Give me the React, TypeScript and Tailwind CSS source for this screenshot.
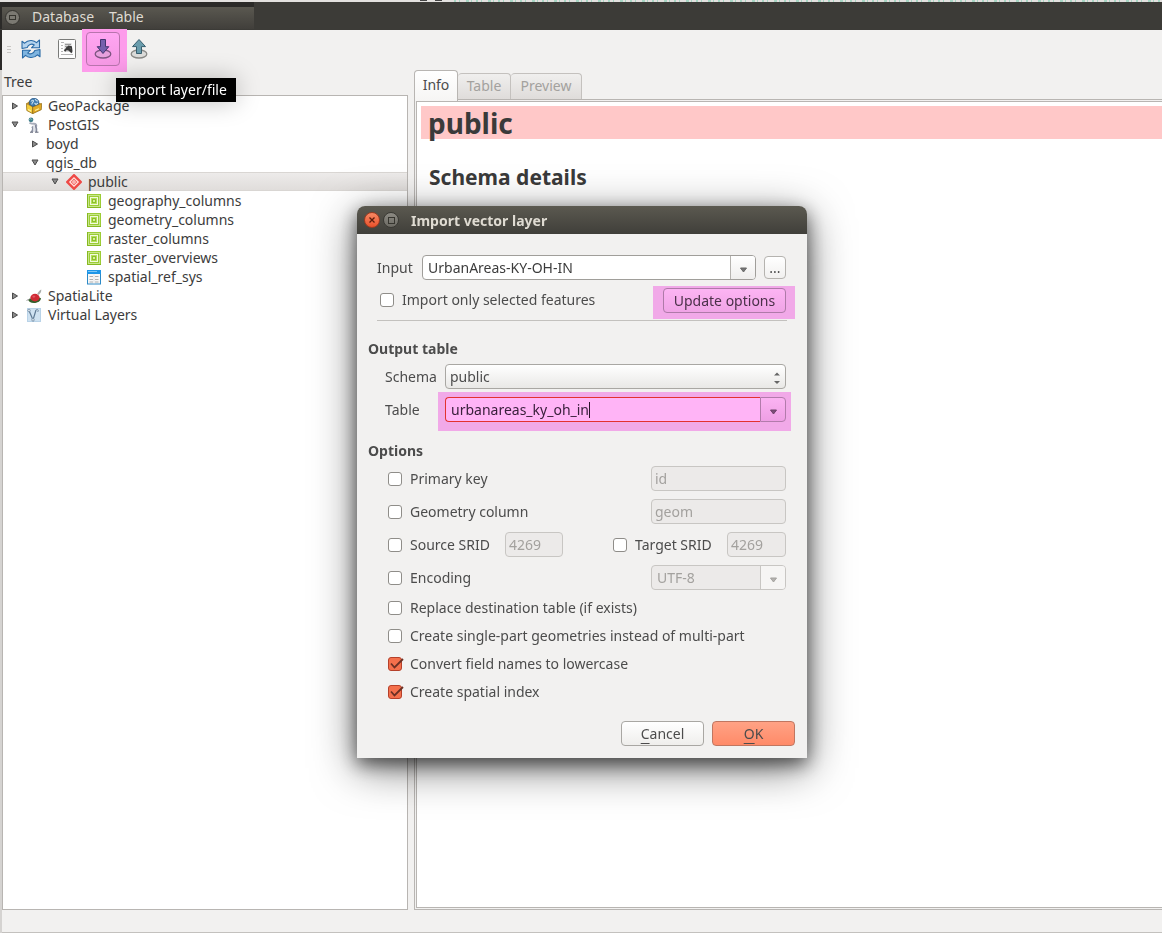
import React, { useState } from "react";

/* ---------- small drawings ---------- */

const Svg = ({ size = 16, children, className = "" }: { size?: number; children: React.ReactNode; className?: string }) => (
  <svg width={size} height={size} viewBox="0 0 16 16" aria-hidden="true" className={`shrink-0 ${className}`}>
    {children}
  </svg>
);

const RefreshIcon = () => (
  <svg width="22" height="22" viewBox="0 0 22 22" aria-hidden="true" strokeLinejoin="round">
    <path d="M2 10.500V3.200l2.600 2C6.500 3.200 9 2.300 11.500 2.500c2.200.2 3.800 1 5 2.200L19.500 2v7.800h-8l2.800-2.900C11.500 5.200 8.300 6.500 7.200 9.500z" fill="#b4d3ee" stroke="#2a6aa6" strokeWidth="1.100" />
    <path d="M20 11.500v7.300l-2.600-2c-1.900 2-4.400 2.900-6.900 2.700-2.200-.2-3.800-1-5-2.200L2.500 20v-7.800h8l-2.800 2.900c2.800 1.700 6 .4 7.100-2.600z" fill="#7fb5e0" stroke="#2a6aa6" strokeWidth="1.100" />
  </svg>
);

const SqlIcon = () => (
  <svg width="20" height="22" viewBox="0 0 20 22" aria-hidden="true">
    <rect x="1.500" y="1.500" width="17" height="19" rx="1" fill="#fdfdfd" stroke="#7a7b79" />
    <path d="M4 4.500h3M4 7.500h2M4 10.500h2M4 13.500h2M4 16.500h12" stroke="#b5b5b5" />
    <path d="M7.500 5h7v9h-7z" fill="#d9d9d9" />
    <path d="M8 6.500h6M8 8.500h3" stroke="#9a9a9a" />
    <path d="M7.500 13l3-3 4.500 4.500M11 8.500l3 .5.500 4" stroke="#3b3b3b" strokeWidth="2" fill="none" />
    <circle cx="11" cy="10.500" r="2" fill="#3b3b3b" />
  </svg>
);

const ImportIcon = () => (
  <svg width="20" height="22" viewBox="0 0 20 22" aria-hidden="true">
    <ellipse cx="10" cy="16" rx="7.800" ry="4" fill="#e7a0dd" stroke="#7d5481" strokeWidth="1.300" />
    <path d="M7.500 1.500h5v7.200h3.300L10 15.500 4.200 8.700h3.300z" fill="#7460ac" stroke="#43356f" strokeLinejoin="round" />
  </svg>
);

const ExportIcon = () => (
  <svg width="20" height="22" viewBox="0 0 20 22" aria-hidden="true">
    <ellipse cx="10" cy="16" rx="7.800" ry="4" fill="#dcdcda" stroke="#898986" strokeWidth="1.300" />
    <path d="M7.500 15.500h5V8.600h4L10 1.500 3.500 8.600h4z" fill="#6a9dad" stroke="#385f6f" strokeLinejoin="round" />
  </svg>
);

const GeoPackageIcon = () => (
  <Svg>
    <path d="M.3 5.500l6.400 3.300v6.900L.8 12.500z" fill="#f6cf3c" stroke="#8a6410" strokeWidth=".7" />
    <path d="M15.700 5.500l-9 3.300v6.900l8.600-4z" fill="#e3ab26" stroke="#8a6410" strokeWidth=".7" />
    <path d="M.3 5.500l3-2.300 12.400 2.300-9 3.300z" fill="#b98a2a" />
    <path d="M3.500 6.500C2.500 2.500 5 .3 8 .3s5.500 2.200 4.800 5.700L6.700 8.500z" fill="#3f7bb0" stroke="#1c4a78" strokeWidth=".6" />
    <path d="M5 3.500c1-1.500 2.500-1.500 2.500-.5S5.500 4.500 6 6.500M9 1.200l1.500 1.600 1.500.200M8.500 5l1.500 1.500 2-1.500" stroke="#c9dfee" fill="none" strokeWidth="1.100" />
    <path d="M2 11.500l3 1.600M9 12.500l4-1.800" stroke="#fff0a0" strokeWidth="1.200" />
  </Svg>
);

const PostgisIcon = () => (
  <Svg>
    <circle cx="5" cy="2.800" r="2.400" fill="#3f7f8c" />
    <path d="M3.300 2.500c1-1.200 1.800-.8 2.600.2" stroke="#9fd0c5" fill="none" />
    <path d="M3.500 5.800c1.500.7 2.500 1 4.500 1s2.500 1 2.200 2.700" fill="none" stroke="#a9adba" strokeWidth="2" />
    <path d="M9.500 8c.8 2.500 1.200 5 .8 7M6 9.500c1.500 1.500 1 3.500-.5 5.500" fill="none" stroke="#858b9d" strokeWidth="1.800" />
    <path d="M7.500 8.500c.5 2 .5 4 .3 6.500" stroke="#d5d8e0" strokeWidth="1.800" fill="none" />
    <path d="M4 15.200h3M9 15.200h3.500" stroke="#5d6375" />
  </Svg>
);

const SchemaIcon = () => (
  <Svg>
    <path d="M8 1L15 8 8 15 1 8z" fill="#f2534f" stroke="#ee4a47" strokeWidth="2" strokeLinejoin="round" />
    <path d="M8 3.800L12.200 8 8 12.200 3.800 8z" fill="none" stroke="#ffe3e0" strokeWidth="1.200" />
    <circle cx="8" cy="8" r="1.700" fill="#fff0ee" />
    <circle cx="8" cy="8" r=".7" fill="#ee4c49" />
  </Svg>
);

const PolygonLayerIcon = () => (
  <Svg>
    <rect x="1" y="1" width="14" height="14" fill="#9ccc35" />
    <rect x="2.500" y="2.500" width="11" height="11" fill="none" stroke="#c7e68c" />
    <rect x="4.500" y="4.500" width="7" height="7" fill="#b4df5b" stroke="#f2fadf" />
    <rect x="6.500" y="6.500" width="3" height="3" fill="#d6f29a" stroke="#8dbf2a" />
    <path d="M1.500 1v13.500H15" fill="none" stroke="#86b820" />
  </Svg>
);

const TableLayerIcon = () => (
  <Svg>
    <rect x="1.500" y="1.500" width="13" height="13.500" fill="#f7f7f7" stroke="#2c8ac7" />
    <rect x="1" y="1" width="14" height="4" fill="#1e96e8" />
    <rect x="2" y="2" width="9" height="1" fill="#7cc6f5" />
    <path d="M3.500 7.500h3.500M9 7.500h3.500M3.500 10.500h3.500M9 10.500h3.500M3.500 13h3.500M9 13h3.500" stroke="#b0b0b0" />
    <path d="M8 5.500v9" stroke="#d5d5d5" strokeDasharray="1 1" />
  </Svg>
);

const SpatiaLiteIcon = () => (
  <Svg>
    <path d="M2 11.500c2-2 12-3 13-1-.5 3-4 4.500-7 4.500-3.500 0-5.500-1.800-6-3.500z" fill="#35602b" />
    <ellipse cx="9" cy="9.600" rx="4.600" ry="3.800" fill="#cf2a34" />
    <ellipse cx="7.800" cy="8.600" rx="1.500" ry="1.100" fill="#de5660" />
    <path d="M15.300 1.500c.2 2.200-.8 4.200-2.800 5.400L11.300 5.800c1-2 2.200-3.500 4-4.300z" fill="#a9aca9" />
    <path d="M.5 12.500l3-1.500" stroke="#9b9b9b" />
  </Svg>
);

const VirtualLayerIcon = () => (
  <Svg>
    <rect x="1" y="1" width="14" height="14" fill="#b9d3e8" />
    <rect x="2" y="2" width="12" height="12" fill="#cfe2f1" />
    <path d="M3 3.500l4 9.500 3-10" fill="none" stroke="#5f7a94" strokeWidth="1.200" />
    <circle cx="3" cy="3.500" r="1.300" fill="#dfe9f2" stroke="#6f879e" strokeWidth=".7" />
    <circle cx="7" cy="12.800" r="1.300" fill="#dfe9f2" stroke="#6f879e" strokeWidth=".7" />
    <path d="M10 3c2-1.500 3 .5 1.500 2" fill="none" stroke="#6f879e" />
  </Svg>
);

const Arrow = ({ open }: { open: boolean }) => (
  <svg width="10" height="10" viewBox="0 0 10 10" aria-hidden="true" className="shrink-0">
    {open ? (
      <path d="M2 2h6L5 7z" fill="#8a8a8a" stroke="#4c4c4c" strokeLinejoin="round" />
    ) : (
      <path d="M2.500 2v6L7.500 5z" fill="#8a8a8a" stroke="#4c4c4c" strokeLinejoin="round" />
    )}
  </svg>
);

const DownGlyph = ({ className }: { className: string }) => (
  <svg width="9" height="6" viewBox="0 0 9 6" aria-hidden="true" className={className}>
    <path d="M1.500 1h6L4.500 5z" />
  </svg>
);

/* ---------- tree ---------- */

type Row = {
  label: string;
  level: "root" | "conn" | "schema" | "leaf";
  open?: boolean;
  icon?: React.ReactNode;
  selected?: boolean;
};

const rows: Row[] = [
  { label: "GeoPackage", level: "root", open: false, icon: <GeoPackageIcon /> },
  { label: "PostGIS", level: "root", open: true, icon: <PostgisIcon /> },
  { label: "boyd", level: "conn", open: false },
  { label: "qgis_db", level: "conn", open: true },
  { label: "public", level: "schema", open: true, icon: <SchemaIcon />, selected: true },
  { label: "geography_columns", level: "leaf", icon: <PolygonLayerIcon /> },
  { label: "geometry_columns", level: "leaf", icon: <PolygonLayerIcon /> },
  { label: "raster_columns", level: "leaf", icon: <PolygonLayerIcon /> },
  { label: "raster_overviews", level: "leaf", icon: <PolygonLayerIcon /> },
  { label: "spatial_ref_sys", level: "leaf", icon: <TableLayerIcon /> },
  { label: "SpatiaLite", level: "root", open: false, icon: <SpatiaLiteIcon /> },
  { label: "Virtual Layers", level: "root", open: false, icon: <VirtualLayerIcon /> },
];

const indent = { root: "pl-[7px]", conn: "pl-[27px]", schema: "pl-[47px]", leaf: "pl-[83px]" };

const TreeRow = ({ row }: { row: Row }) => (
  <li
    role="treeitem"
    aria-expanded={row.open}
    aria-selected={!!row.selected}
    className={`flex h-[19px] items-center ${indent[row.level]} ${
      row.selected ? "border-y border-[#d9d6d3] bg-linear-to-b from-[#edebea] to-[#e0dddb]" : ""
    }`}
  >
    {row.open !== undefined && <Arrow open={row.open} />}
    {row.icon && <span className={row.level === "leaf" ? "mr-1.5" : "mr-1.5 ml-1.5"}>{row.icon}</span>}
    <span className={row.icon ? "" : "ml-1.5"}>{row.label}</span>
  </li>
);

/* ---------- form controls ---------- */

const Check = ({ label, defaultChecked = false }: { label: string; defaultChecked?: boolean }) => (
  <label className="flex items-center gap-2">
    <span className="grid h-3.5 w-3.5 shrink-0">
      <input
        type="checkbox"
        defaultChecked={defaultChecked}
        className="peer col-start-1 row-start-1 h-3.5 w-3.5 appearance-none rounded-[3px] border border-[#8f8d89] bg-white checked:border-[#b5402a] checked:bg-[#f4704c]"
      />
      <svg
        viewBox="0 0 14 14"
        aria-hidden="true"
        className="pointer-events-none invisible col-start-1 row-start-1 h-3.5 w-3.5 overflow-visible peer-checked:visible"
      >
        <path d="M3 6.500L6.500 10.500 15 2" fill="none" stroke="#6b3024" strokeWidth="1.800" />
      </svg>
    </span>
    <span>{label}</span>
  </label>
);

const Disabled = ({ label, value, width }: { label: string; value: string; width: string }) => (
  <input
    type="text"
    disabled
    aria-label={label}
    defaultValue={value}
    className={`h-[25px] rounded border border-[#c8c6c3] bg-[#eceae9] px-[3px] text-[#a3a19e] ${width}`}
  />
);

const ImportDialog = () => (
  <section
    role="dialog"
    aria-labelledby="dialog-title"
    className="w-[450px] max-w-full rounded-t-lg bg-[#f2f1f0] text-[#4c4c4c] shadow-[0_10px_44px_rgba(0,0,0,0.550),0_6px_18px_rgba(0,0,0,0.550)]"
  >
    <header className="flex h-7 items-center rounded-t-lg bg-linear-to-b from-[#5b5950] to-[#403f3a] px-[7px]">
      <button type="button" aria-label="Close" className="grid h-4 w-4 place-items-center rounded-full border border-[#a03a20] bg-linear-to-b from-[#f78863] to-[#e9502a]">
        <svg width="6" height="6" viewBox="0 0 6 6" aria-hidden="true">
          <path d="M.5.500l5 5M5.500.500l-5 5" stroke="#5a1c0c" strokeWidth="1.300" />
        </svg>
      </button>
      <button type="button" aria-label="Maximize" className="ml-[3px] grid h-4 w-4 place-items-center rounded-full border border-[#3a3934] bg-linear-to-b from-[#8c8a83] to-[#6c6a63]">
        <span className="h-[7px] w-[7px] border border-[#36352f]" />
      </button>
      <h2 id="dialog-title" className="ml-3 pt-px text-[14px] leading-5 font-bold text-[#dfdbd2]">Import vector layer</h2>
    </header>

    <form className="flex flex-col pt-[21px] pb-3" onSubmit={(e) => e.preventDefault()}>
      <div className="flex items-center pr-[21px] pl-5">
        <label htmlFor="input-layer" className="w-[45px]">Input</label>
        <div className="flex h-[25px] min-w-0 flex-1 overflow-hidden rounded border border-[#a09e9a] bg-white">
          <input id="input-layer" type="text" defaultValue="UrbanAreas-KY-OH-IN" className="min-w-0 flex-1 px-[5px] text-[#3c3c3c]" />
          <button type="button" aria-label="Choose input layer" className="grid w-[25px] place-items-center border-l border-[#b5b3af] bg-linear-to-b from-white to-[#efeeed]">
            <DownGlyph className="mt-1 fill-[#777] stroke-[#666]" />
          </button>
        </div>
        <button type="button" aria-label="Browse" className="ml-2 h-[23px] w-[22px] rounded border border-[#b5b3af] bg-linear-to-b from-white to-[#f1f0ef] leading-5">...</button>
      </div>

      <div className="mt-1.5 flex items-start justify-between pr-3 pl-[23px]">
        <div className="pt-1"><Check label="Import only selected features" /></div>
        <div className="bg-[#f1a9e8] pt-0.5 pr-[9px] pb-1.5 pl-2.5">
          <button type="button" className="block h-[25px] w-[123px] rounded border border-[#ae7aa8] bg-linear-to-b from-[#fcb4f3] to-[#f0a4e6] text-[#4a3048]">
            Update options
          </button>
        </div>
      </div>
      <hr className="mt-px mr-5 ml-5 border-t border-[#c3c1be]" />

      <h3 className="mt-[18px] ml-[11px] leading-5 font-bold">Output table</h3>
      <div className="mt-[5px] flex items-center pr-[21px] pl-7">
        <label htmlFor="schema" className="w-[60px]">Schema</label>
        <div className="relative min-w-0 flex-1">
          <select id="schema" className="block h-[25px] w-full appearance-none rounded border border-[#a9a7a3] bg-linear-to-b from-white to-[#e9e8e6] px-1 text-[#4c4c4c]">
            <option>public</option>
          </select>
          <svg width="6" height="12" viewBox="0 0 6 12" aria-hidden="true" className="pointer-events-none absolute top-2 right-1.5 fill-[#666]">
            <path d="M3 .5l3 3H0zM3 12L0 9h6z" />
          </svg>
        </div>
      </div>
      <div className="mt-[3px] flex items-start pr-4 pl-7">
        <label htmlFor="table" className="w-[53px] pt-2">Table</label>
        <div className="min-w-0 flex-1 bg-[#f1a9e8] pt-[5px] pr-[5px] pb-[9px] pl-[7px]">
          <div className="flex h-[25px]">
            <div className="flex min-w-0 flex-1 items-center rounded-l border border-r-0 border-[#e2322f] bg-[#ffb4f6]">
              <input id="table" type="text" defaultValue="urbanareas_ky_oh_in" className="field-sizing-content min-w-0 pl-[5px] text-[#3a203c]" />
              <span className="h-4 w-px bg-[#2b142b]" />
            </div>
            <button type="button" aria-label="Choose table" className="grid w-[26px] place-items-center rounded-r border border-[#b27bab] bg-linear-to-b from-[#fbb3f2] to-[#ee9fe4]">
              <DownGlyph className="mt-1 fill-[#7c4f78] stroke-[#6c4069]" />
            </button>
          </div>
        </div>
      </div>

      <h3 className="mt-2.5 ml-[11px] leading-5 font-bold">Options</h3>
      <div className="mt-[5px] flex flex-col gap-2 pr-[21px] pl-[31px]">
        <div className="flex items-center justify-between">
          <Check label="Primary key" />
          <Disabled label="Primary key name" value="id" width="w-[135px]" />
        </div>
        <div className="flex items-center justify-between">
          <Check label="Geometry column" />
          <Disabled label="Geometry column name" value="geom" width="w-[135px]" />
        </div>
        <div className="flex items-center justify-between">
          <div className="flex w-[175px] items-center justify-between">
            <Check label="Source SRID" />
            <Disabled label="Source SRID value" value="4269" width="w-[58px]" />
          </div>
          <div className="flex w-[173px] items-center justify-between">
            <Check label="Target SRID" />
            <Disabled label="Target SRID value" value="4269" width="w-[59px]" />
          </div>
        </div>
        <div className="flex items-center justify-between">
          <Check label="Encoding" />
          <div className="flex h-[25px] w-[135px] overflow-hidden rounded border border-[#c8c6c3] bg-[#eceae9]">
            <input type="text" disabled aria-label="Encoding name" defaultValue="UTF-8" className="min-w-0 flex-1 px-[5px] text-[#a3a19e]" />
            <button type="button" disabled aria-label="Choose encoding" className="grid w-[25px] place-items-center border-l border-[#c8c6c3] bg-[#f6f5f4]">
              <DownGlyph className="mt-1 fill-[#b5b3b0] stroke-[#a3a19e]" />
            </button>
          </div>
        </div>
      </div>

      <div className="mt-1 flex flex-col pl-[31px]">
        <div className="flex h-7 items-center"><Check label="Replace destination table (if exists)" /></div>
        <div className="flex h-7 items-center"><Check label="Create single-part geometries instead of multi-part" /></div>
        <div className="flex h-7 items-center"><Check label="Convert field names to lowercase" defaultChecked /></div>
        <div className="flex h-7 items-center"><Check label="Create spatial index" defaultChecked /></div>
      </div>

      <div className="mt-[15px] flex justify-end gap-2 pr-3">
        <button type="button" className="h-[25px] w-[83px] rounded border border-[#a9a7a3] bg-linear-to-b from-white to-[#efeeec]">
          <span className="underline underline-offset-4">C</span>ancel
        </button>
        <button type="submit" className="h-[25px] w-[83px] rounded border border-[#c07660] bg-linear-to-b from-[#ffa285] to-[#ff8a68]">
          <span className="underline underline-offset-4">O</span>K
        </button>
      </div>
    </form>
  </section>
);

/* ---------- window ---------- */

const tabs = [
  { name: "Info", width: "w-11" },
  { name: "Table", width: "w-[53px]" },
  { name: "Preview", width: "w-[71px]" },
];

export default function App() {
  const [tab, setTab] = useState("Info");
  return (
    <div className="flex min-h-screen flex-col overflow-hidden bg-[#e3e1df] font-['Noto_Sans','Open_Sans',sans-serif] text-[14px] leading-5 text-[#3c3c3c]">
      <div className="flex h-0.5 items-end justify-between overflow-hidden">
        <span className="h-[17px]">Browser Panel</span>
        <svg width="742" height="2" aria-hidden="true" className="shrink-0">
          <path d="M0 0h7M15 0h7" stroke="#444" strokeWidth="2" />
          <path d="M34 1h708" stroke="#6cc9a8" strokeWidth="1" strokeDasharray="2 3 1 6 3 2 1 4" />
        </svg>
      </div>

      <div className="flex flex-1 flex-col border-l-2 border-[#d5d3d1] bg-[#f2f1f0]">
        <header className="-ml-0.5 flex h-7 bg-[#3c3b37]">
          <nav className="mb-px flex w-[254px] items-center border-t-[5px] border-l-2 border-[#2b2a28] bg-linear-to-b from-[#5a5850] to-[#413f3b] pb-0.5 pl-[3px] text-[#dfdbd2]">
            <button type="button" aria-label="Restore window" className="grid h-[15px] w-[15px] place-items-center rounded-full border border-[#33322e] bg-[#7b7972]">
              <span className="h-[5px] w-[7px] border border-[#36352f]" />
            </button>
            <button type="button" className="ml-3 w-[65px] text-left">Database</button>
            <button type="button" className="ml-3">Table</button>
          </nav>
        </header>

        <div className="-ml-0.5 flex h-10 items-center border-l-2 border-[#2b2a28] pb-0.5 pl-[5px]">
          <span className="flex flex-col gap-0.5">
            <span className="h-px w-1 bg-[#c9c7c4]" />
            <span className="h-px w-1 bg-[#c9c7c4]" />
            <span className="h-px w-1 bg-[#c9c7c4]" />
          </span>
          <button type="button" aria-label="Refresh" className="ml-[9px] grid h-[34px] w-[22px] place-items-center"><RefreshIcon /></button>
          <button type="button" aria-label="SQL window" className="ml-[15px] grid h-[34px] w-5 place-items-center"><SqlIcon /></button>
          <div className="relative ml-[9px]">
            <span className="absolute -top-[3px] -left-1 h-[43px] w-[45px] bg-[#fd9ceb]" />
            <button type="button" aria-label="Import layer/file" className="relative grid h-[34px] w-[34px] place-items-center rounded border border-[#b874ad] bg-linear-to-b from-[#ffa6f2] to-[#f598e4]">
              <ImportIcon />
            </button>
            <span role="tooltip" className="absolute top-[46px] left-[30px] z-10 w-[120px] bg-black px-1 py-0.5 whitespace-nowrap text-white shadow-[0_0_24px_rgba(0,0,0,0.250)]">
              Import layer/file
            </span>
          </div>
          <button type="button" aria-label="Export to file" className="ml-[9px] grid h-[34px] w-5 place-items-center"><ExportIcon /></button>
        </div>

        <main className="flex flex-1 gap-1.5">
          <div className="flex w-[406px] shrink-0 flex-col">
            <h2 className="h-[25px] pt-0.5 pl-0.5">Tree</h2>
            <ul role="tree" aria-label="Tree" className="flex-1 border border-[#b8b5b2] bg-white">
              {rows.map((row) => <TreeRow key={row.label} row={row} />)}
            </ul>
          </div>

          <div className="flex min-w-0 flex-1 flex-col">
            <div role="tablist" className="flex h-[29px] items-end">
              {tabs.map(({ name, width }) => (
                <button
                  key={name}
                  type="button"
                  role="tab"
                  aria-selected={tab === name}
                  onClick={() => setTab(name)}
                  className={
                    tab === name
                      ? `relative -mb-0.5 h-[31px] rounded-t border border-b-0 border-[#b8b5b2] bg-linear-to-b from-white to-[#f6f5f4] pb-0.5 text-[#4c4c4c] ${width}`
                      : `h-[26px] rounded-t border border-b-0 border-l-0 border-[#c4c1be] bg-linear-to-b from-[#f0efee] to-[#dfdcda] pb-0.5 text-[#a3a19e] ${width}`
                  }
                >
                  {name}
                </button>
              ))}
            </div>
            <div className="flex flex-1 border border-r-0 border-[#b8b5b2] pt-px pb-px pl-px">
              <article className="min-w-0 flex-1 border border-r-0 border-[#b8b5b2] bg-white pt-1 pl-1 text-[#3a3a3a]">
                <h1 className="h-[33px] bg-[#ffc8c8] pl-[7px] text-[28px] leading-[34px] font-bold">public</h1>
                <h2 className="mt-6 pl-2 text-[21px] leading-7 font-bold">Schema details</h2>
              </article>
            </div>
          </div>
        </main>
        <footer className="mt-px h-[22px] border-b border-[#c3c1be]" />
      </div>

      <div className="fixed inset-0 flex items-start justify-center pt-[206px] pl-0.5">
        <ImportDialog />
      </div>
    </div>
  );
}
